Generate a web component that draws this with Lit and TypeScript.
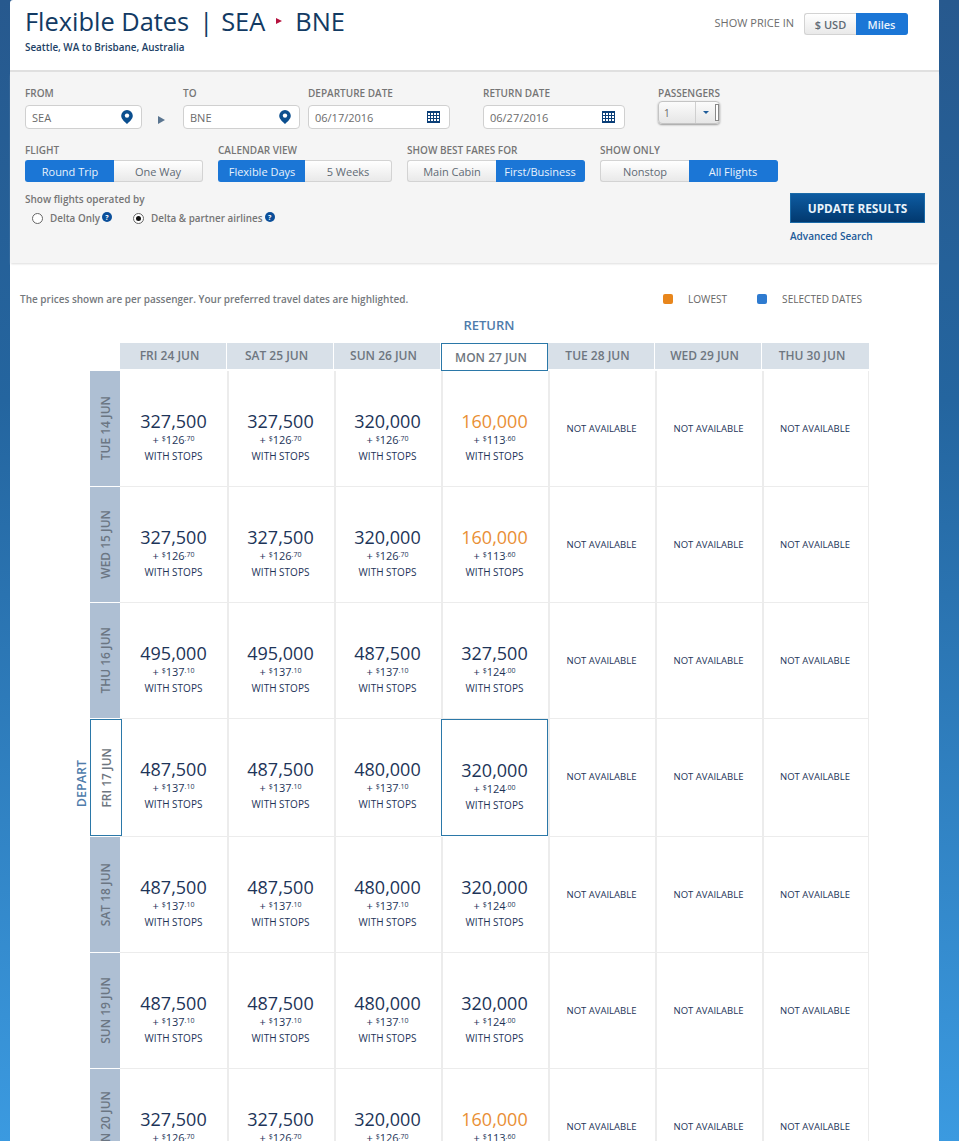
import { LitElement, html, css, svg } from "lit";
import { customElement } from "lit/decorators.js";

type Fare = { m: string; d: string; c: string; low?: boolean };
const COLS = ["FRI 24 JUN", "SAT 25 JUN", "SUN 26 JUN", "MON 27 JUN", "TUE 28 JUN", "WED 29 JUN", "THU 30 JUN"];
const low: Fare[] = [
  { m: "327,500", d: "126", c: ".70" },
  { m: "327,500", d: "126", c: ".70" },
  { m: "320,000", d: "126", c: ".70" },
  { m: "160,000", d: "113", c: ".60", low: true },
];
const high: Fare[] = [
  { m: "495,000", d: "137", c: ".10" },
  { m: "495,000", d: "137", c: ".10" },
  { m: "487,500", d: "137", c: ".10" },
  { m: "327,500", d: "124", c: ".00" },
];
const mid: Fare[] = [
  { m: "487,500", d: "137", c: ".10" },
  { m: "487,500", d: "137", c: ".10" },
  { m: "480,000", d: "137", c: ".10" },
  { m: "320,000", d: "124", c: ".00" },
];
const ROWS: { label: string; fares: Fare[]; sel?: boolean }[] = [
  { label: "TUE 14 JUN", fares: low },
  { label: "WED 15 JUN", fares: low },
  { label: "THU 16 JUN", fares: high },
  { label: "FRI 17 JUN", fares: mid, sel: true },
  { label: "SAT 18 JUN", fares: mid },
  { label: "SUN 19 JUN", fares: mid },
  { label: "MON 20 JUN", fares: low },
];

const pin = html`<svg class="ico" width="12" height="14" viewBox="0 0 12 14"><path fill="#0b4f8f" d="M6 0a5.8 5.8 0 0 1 5.8 5.8C11.800 9.300 8 12 6 14 4 12 .2 9.300 .2 5.800A5.800 5.800 0 0 1 6 0z"/><circle cx="6" cy="5.600" r="2.200" fill="#fff"/></svg>`;
const cal = html`<svg class="ico" width="13" height="12" viewBox="0 0 13 12"><rect width="13" height="12" fill="#0b3f78"/><g fill="#fff">${[2, 5, 8].map((y) => [1, 4, 7, 10].map((x) => svg`<rect x="${x}" y="${y}" width="2" height="2"/>`))}</g></svg>`;
const help = html`<span class="help">?</span>`;

const toggle = (a: string, b: string, on: 0 | 1, w = "") => html`<div class="toggle ${w}">
  <span class="opt ${on === 0 ? "on" : ""}">${a}</span><span class="opt ${on === 1 ? "on" : ""}">${b}</span>
</div>`;

@customElement("app-root")
export class AppRoot extends LitElement {
  static styles = css`
    :host {
      display: block;
      height: 1141px;
      overflow: hidden;
      background: linear-gradient(#27598e 0, #24659f 400px, #3b9ae0 1141px);
      font-family: "Open Sans", "Noto Sans", sans-serif;
      color: #6d6d6d;
    }
    .panel { margin: 0 20px 0 10px; background: #fff; border-top-left-radius: 3px; height: 1141px; }
    .head { box-sizing: border-box; padding: 0 31px 0 15px; display: flex; justify-content: space-between; border-bottom: 2px solid #e0e0e0; height: 72px; }
    .title { margin: 0; font-size: 25.400px; font-weight: 400; line-height: 32px; padding-top: 5px; color: #123a63; display: flex; align-items: center; white-space: pre; }
    .title .bar { margin: 0 8px 0 10px; }
    .title svg { margin: 0 13px 0 11px; }
    .sub { margin: 4px 0 0; font-size: 9.900px; font-weight: 600; color: #1d3f66; line-height: 13px; }
    .price { display: flex; align-items: center; gap: 10px; height: 22px; margin-top: 13px; font-size: 11px; font-weight: 400; }
    .price-lab { margin-bottom: 3px; }

    .toggle { display: flex; height: 22px; font-size: 11px; font-weight: 400; }
    .opt { flex: 1; display: flex; align-items: center; justify-content: center; box-sizing: border-box; border: 1px solid #d3d3d3; background: linear-gradient(#fff, #e9e9e9); color: #5f6a74; }
    .opt:first-child { border-radius: 3px 0 0 3px; border-right: 0; }
    .opt:last-child { border-radius: 0 3px 3px 0; border-left: 0; }
    .opt.on { background: #1b76d6; border-color: #1b76d6; color: #e8f2fc; }
    .w104 { width: 104px; font-weight: 600; }
    .w178 { width: 178px; }
    .w174 { width: 174px; }

    .form { background: #f5f5f5; height: 191px; box-sizing: border-box; padding: 15px 15px 0; box-shadow: 0 2px 2px -1px #ddd; }
    .row { display: flex; }
    .field { display: flex; flex-direction: column; }
    .lab { font-size: 10px; font-weight: 600; line-height: 13px; color: #757575; white-space: nowrap; }
    .row1 .lab { margin-bottom: 5px; }
    .row2 .lab { margin-bottom: 3px; }
    .input { height: 24px; box-sizing: border-box; background: #fff; border: 1px solid #d0d0d0; border-radius: 4px; display: flex; align-items: center; justify-content: space-between; padding: 0 8px 0 6px; font-size: 11px; color: #6b6b6b; }
    .w117 { width: 117px; }
    .w142 { width: 142px; padding-right: 9px; }
    .arrow { width: 41px; padding-top: 24px; box-sizing: border-box; display: flex; justify-content: center; align-items: center; padding-right: 2px; }
    .f-dep { margin-left: 8px; }
    .f-ret { margin-left: 33px; }
    .f-pax { margin-left: 33px; }
    .pax { width: 62px; height: 23px; margin-top: -4px; box-sizing: border-box; border: 1px solid #c4c4c4; border-radius: 4px; background: linear-gradient(#fbfbfb, #e6e6e6); box-shadow: 0 1px 2px #999; display: flex; font-size: 10px; color: #666; }
    .pax-v { width: 37px; padding-left: 5px; display: flex; align-items: center; box-sizing: border-box; border-right: 1px solid #cfcfcf; }
    .pax-c { flex: 1; display: flex; align-items: center; padding-left: 7px; gap: 6px; }
    .tri { width: 0; height: 0; border: 3px solid transparent; border-top: 3px solid #1f5c99; border-bottom: 0; }
    .box { width: 2px; height: 15px; border: 1px solid #888; background: #fff; }

    .row2 { margin-top: 15px; gap: 15px; }
    .row3 { margin-top: 11px; justify-content: space-between; }
    .op-title { font-size: 10px; font-weight: 600; line-height: 13px; color: #757575; }
    .radios { display: flex; margin: 5px 0 0 7px; font-size: 9.900px; font-weight: 600; color: #757575; align-items: center; }
    .radio { width: 9px; height: 9px; border: 1px solid #666; background: #fff; border-radius: 50%; margin-right: 7px; display: flex; align-items: center; justify-content: center; }
    .radio.on::after { content: ""; width: 5px; height: 5px; border-radius: 50%; background: #111; }
    .help { width: 10px; height: 10px; border-radius: 50%; background: #0b4f9a; color: #fff; font-size: 7px; font-weight: 700; display: inline-flex; align-items: center; justify-content: center; margin: 0 0 2px 2px; line-height: 1; }
    .r2 { margin-left: 21px; }
    .cta { width: 135px; margin-right: -1px; }
    .btn { height: 30px; box-sizing: border-box; border: 1px solid #1a6aa8; background: linear-gradient(#0d5ba1, #02396f); color: #eaf3fb; font-size: 11.800px; font-weight: 700; display: flex; align-items: center; justify-content: center; }
    .adv { display: block; margin-top: 7px; font-size: 10px; font-weight: 600; color: #1c5a99; line-height: 13px; }

    .note-row { display: flex; justify-content: space-between; align-items: center; padding: 29px 0 0 10px; width: 842px; height: 13px; box-sizing: content-box; }
    .note { font-size: 10px; font-weight: 600; color: #75797d; white-space: nowrap; }
    .legend { display: flex; align-items: center; font-size: 10.100px; font-weight: 400; color: #666; }
    .dot { width: 10px; height: 10px; border-radius: 2px; margin-right: 15px; }
    .dot.or { background: #e8861c; }
    .dot.bl { background: #2e7bd0; margin-left: 30px; }
    .ret { width: 958px; text-align: center; font-size: 13px; font-weight: 600; color: #4f7cab; line-height: 16px; margin-top: 12px; }

    .table { display: flex; margin-top: 10px; }
    .depart { width: 80px; box-sizing: border-box; padding: 417px 0 0 65px; }
    .vert { writing-mode: vertical-rl; transform: rotate(180deg); }
    .depart .vert { font-size: 12.500px; font-weight: 600; color: #4f7cab; line-height: 14px; }
    .grid { display: grid; grid-template-columns: 30px repeat(7, 107px); grid-template-rows: 28px; width: 779px; }
    .hc { height: 26px; margin-right: 1px; background: #d8e0e8; display: flex; align-items: center; justify-content: center; box-sizing: border-box; padding: 0 7px 1px 0; font-size: 12px; font-weight: 600; color: #6e7680; }
    .hc.last { margin-right: 0; }
    .hc.sel { background: #fff; height: 28px; border: 1px solid #2b78a8; margin-right: 0; padding: 1px 7px 0 0; }
    .rl { height: 115px; margin-bottom: 1px; background: #aebfd3; display: flex; align-items: center; justify-content: center; font-size: 12px; font-weight: 600; color: #6b7683; }
    .rl.sel { background: #fff; height: 117px; box-sizing: border-box; border: 1px solid #2b78a8; width: 32px; position: relative; z-index: 1; color: #6e7680; }
    .c { height: 116px; box-sizing: border-box; border-left: 2px solid #ececec; border-bottom: 1px solid #ececec; display: flex; flex-direction: column; align-items: center; color: #1d3458; padding-right: 2px; }
    .c.tall { height: 118px; }
    .c.first { border-left: 0; padding-right: 0; }
    .c.end { border-right: 1px solid #ececec; }
    .c.picked { border: 1px solid #2b78a8; padding-right: 0; height: 117px; margin-bottom: 1px; }
    .m { font-size: 18px; line-height: 24px; margin-top: 38px; }
    .m.low { color: #e98f35; }
    .d { font-size: 11px; line-height: 14px; white-space: nowrap; }
    sup { font-size: 7px; line-height: 0; vertical-align: 3px; }
    .st { font-size: 10px; line-height: 12px; margin-top: 3px; }
    .na { font-size: 9.500px; font-weight: 500; margin-top: 52px; line-height: 12px; white-space: nowrap; }
    .ico { display: block; flex: none; }
  `;

  private fareCell(f: Fare | undefined, i: number, row: { sel?: boolean }) {
    const cls = [
      "c",
      i === 0 ? "first" : "",
      i === 6 ? "end" : "",
      row.sel ? "tall" : "",
      row.sel && i === 3 ? "picked" : "",
    ].join(" ");
    if (!f) return html`<div class=${cls}><div class="na">NOT AVAILABLE</div></div>`;
    return html`<div class=${cls}>
      <div class="m ${f.low ? "low" : ""}">${f.m}</div>
      <div class="d">+ <sup>$</sup>${f.d}<sup>${f.c}</sup></div>
      <div class="st">WITH STOPS</div>
    </div>`;
  }

  render() {
    return html`<div class="panel">
      <header class="head">
        <div>
          <h1 class="title">Flexible Dates<span class="bar">|</span>SEA<svg width="6" height="6" viewBox="0 0 6 6"><path fill="#b5123e" d="M0 0l6 3-6 3z"/></svg>BNE</h1>
          <p class="sub">Seattle, WA to Brisbane, Australia</p>
        </div>
        <div class="price"><span class="price-lab">SHOW PRICE IN</span>${toggle("$ USD", "Miles", 1, "w104")}</div>
      </header>
      <section class="form">
        <div class="row row1">
          <div class="field"><span class="lab">FROM</span><div class="input w117">SEA ${pin}</div></div>
          <div class="arrow"><svg width="7" height="8" viewBox="0 0 7 8"><path fill="#5a7590" d="M0 0l7 4-7 4z"/></svg></div>
          <div class="field"><span class="lab">TO</span><div class="input w117">BNE ${pin}</div></div>
          <div class="field f-dep"><span class="lab">DEPARTURE DATE</span><div class="input w142">06/17/2016 ${cal}</div></div>
          <div class="field f-ret"><span class="lab">RETURN DATE</span><div class="input w142">06/27/2016 ${cal}</div></div>
          <div class="field f-pax"><span class="lab">PASSENGERS</span><div class="pax"><span class="pax-v">1</span><span class="pax-c"><i class="tri"></i><i class="box"></i></span></div></div>
        </div>
        <div class="row row2">
          <div class="field"><span class="lab">FLIGHT</span>${toggle("Round Trip", "One Way", 0, "w178")}</div>
          <div class="field"><span class="lab">CALENDAR VIEW</span>${toggle("Flexible Days", "5 Weeks", 0, "w174")}</div>
          <div class="field"><span class="lab">SHOW BEST FARES FOR</span>${toggle("Main Cabin", "First/Business", 1, "w178")}</div>
          <div class="field"><span class="lab">SHOW ONLY</span>${toggle("Nonstop", "All Flights", 1, "w178")}</div>
        </div>
        <div class="row row3">
          <div>
            <div class="op-title">Show flights operated by</div>
            <div class="radios">
              <span class="radio"></span>Delta Only ${help}
              <span class="radio on r2"></span>Delta &amp; partner airlines ${help}
            </div>
          </div>
          <div class="cta">
            <div class="btn">UPDATE RESULTS</div>
            <a class="adv">Advanced Search</a>
          </div>
        </div>
      </section>
      <div class="note-row">
        <span class="note">The prices shown are per passenger. Your preferred travel dates are highlighted.</span>
        <span class="legend"><i class="dot or"></i>LOWEST<i class="dot bl"></i>SELECTED DATES</span>
      </div>
      <div class="ret">RETURN</div>
      <div class="table">
        <div class="depart"><div class="vert">DEPART</div></div>
        <div class="grid">
          <div></div>
          ${COLS.map((c, i) => html`<div class="hc ${i === 3 ? "sel" : ""} ${i === 6 ? "last" : ""}">${c}</div>`)}
          ${ROWS.map(
            (r) => html`<div class="rl ${r.sel ? "sel" : ""}"><span class="vert">${r.label}</span></div>
              ${COLS.map((_, i) => this.fareCell(r.fares[i], i, r))}`
          )}
        </div>
      </div>
    </div>`;
  }
}
